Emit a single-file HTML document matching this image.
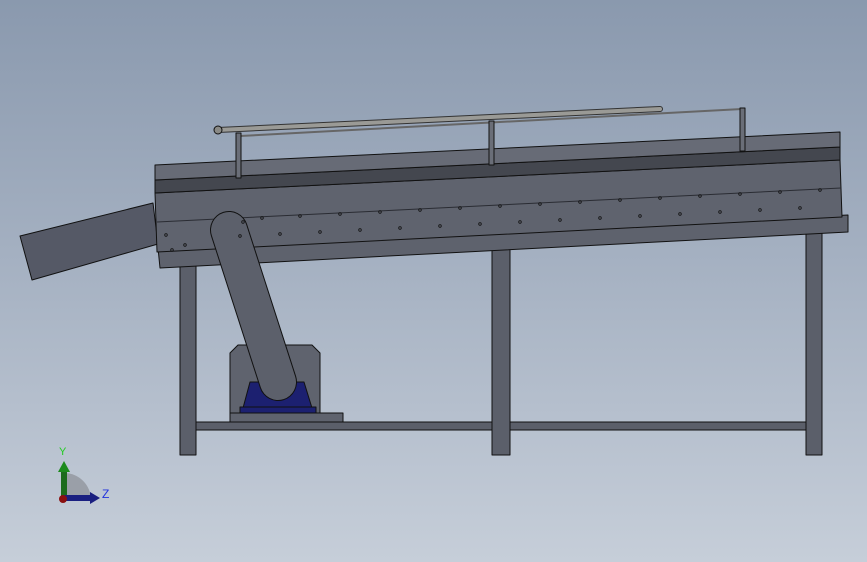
<!DOCTYPE html>
<html><head><style>
html,body{margin:0;padding:0;width:867px;height:562px;overflow:hidden}
body{background:linear-gradient(180deg,#8a99ae 0%,#a4b0c1 45%,#c6ced9 100%);font-family:"Liberation Sans",sans-serif}
</style></head><body>
<svg width="867" height="562" viewBox="0 0 867 562" xmlns="http://www.w3.org/2000/svg" style="position:absolute;left:0;top:0">
<g stroke="#111" stroke-width="1" stroke-linejoin="round">
<rect x="180" y="246" width="16" height="209" fill="#5b5f6a"/>
<rect x="492" y="228" width="18" height="227" fill="#5b5f6a"/>
<rect x="806" y="214" width="16" height="241" fill="#5b5f6a"/>
<rect x="196" y="422" width="296" height="8" fill="#5b5f6a"/>
<rect x="510" y="422" width="296" height="8" fill="#5b5f6a"/>
<polygon points="20,236 153,203 158,244 32,280" fill="#555966"/>
<polygon points="158,248 848,215 848,232 160,268" fill="#5e626d"/>
<polygon points="155,193 840,160 842,217 157,252" fill="#5f636e"/>
<line x1="157" y1="222" x2="841" y2="188" stroke="#2a2c33"/>
<polygon points="155,180 840,147 840,160 155,193" fill="#44474f"/>
<polygon points="155,165 840,132 840,147 155,180" fill="#676b76"/>
<line x1="240" y1="136" x2="742" y2="109" stroke="#666" stroke-width="2"/>
<rect x="236" y="133" width="5" height="45" fill="#6a6e78"/>
<rect x="489" y="121" width="5" height="44" fill="#6a6e78"/>
<rect x="740" y="108" width="5" height="43" fill="#6a6e78"/>
<line x1="218" y1="130" x2="660" y2="109" stroke="#333" stroke-width="6" stroke-linecap="round"/>
<line x1="218" y1="130" x2="660" y2="109" stroke="#9a9a96" stroke-width="4" stroke-linecap="round"/>
<circle cx="218" cy="130" r="4" fill="#8a8a86"/>
<polygon points="238,345 312,345 320,353 320,413 230,413 230,353" fill="#5f636e"/>
<rect x="230" y="413" width="113" height="9" fill="#5f636e"/>
<polygon points="250,382 304,382 312,408 243,408" fill="#1c2070"/>
<rect x="240" y="407" width="76" height="6" fill="#1c2070"/>
</g>
<line x1="229" y1="230" x2="278" y2="382" stroke="#111" stroke-width="38" stroke-linecap="round"/>
<line x1="229" y1="230" x2="278" y2="382" stroke="#5c606b" stroke-width="36" stroke-linecap="round"/>
<g fill="none" stroke="#111" stroke-width="0.8">
<circle cx="185" cy="245" r="1.3"/><circle cx="243" cy="222" r="1.3"/><circle cx="262" cy="218" r="1.3"/>
<circle cx="300" cy="216" r="1.3"/><circle cx="340" cy="214" r="1.3"/><circle cx="380" cy="212" r="1.3"/>
<circle cx="420" cy="210" r="1.3"/><circle cx="460" cy="208" r="1.3"/><circle cx="500" cy="206" r="1.3"/>
<circle cx="540" cy="204" r="1.3"/><circle cx="580" cy="202" r="1.3"/><circle cx="620" cy="200" r="1.3"/>
<circle cx="660" cy="198" r="1.3"/><circle cx="700" cy="196" r="1.3"/><circle cx="740" cy="194" r="1.3"/>
<circle cx="780" cy="192" r="1.3"/><circle cx="820" cy="190" r="1.3"/>
<circle cx="240" cy="236" r="1.3"/><circle cx="280" cy="234" r="1.3"/><circle cx="320" cy="232" r="1.3"/>
<circle cx="360" cy="230" r="1.3"/><circle cx="400" cy="228" r="1.3"/><circle cx="440" cy="226" r="1.3"/>
<circle cx="480" cy="224" r="1.3"/><circle cx="520" cy="222" r="1.3"/><circle cx="560" cy="220" r="1.3"/>
<circle cx="600" cy="218" r="1.3"/><circle cx="640" cy="216" r="1.3"/><circle cx="680" cy="214" r="1.3"/>
<circle cx="720" cy="212" r="1.3"/><circle cx="760" cy="210" r="1.3"/><circle cx="800" cy="208" r="1.3"/>
<circle cx="166" cy="235" r="1.3"/><circle cx="172" cy="250" r="1.3"/>
</g>
<path d="M64 500 L64 473 A27 27 0 0 1 91 500 Z" fill="#9a9fa8"/>
<rect x="61" y="470" width="6" height="30" fill="#1c6b1c"/>
<polygon points="58,472 64,461 70,472" fill="#1c8a1c"/>
<rect x="64" y="495" width="28" height="6" fill="#1a1f80"/>
<polygon points="90,492 100,498 90,504" fill="#1a1f80"/>
<circle cx="63" cy="499" r="4" fill="#8a1010"/>
<text x="59" y="455" font-size="11" fill="#22cc22">Y</text>
<text x="102" y="498" font-size="12" fill="#2233dd">Z</text>
</svg>
</body></html>
